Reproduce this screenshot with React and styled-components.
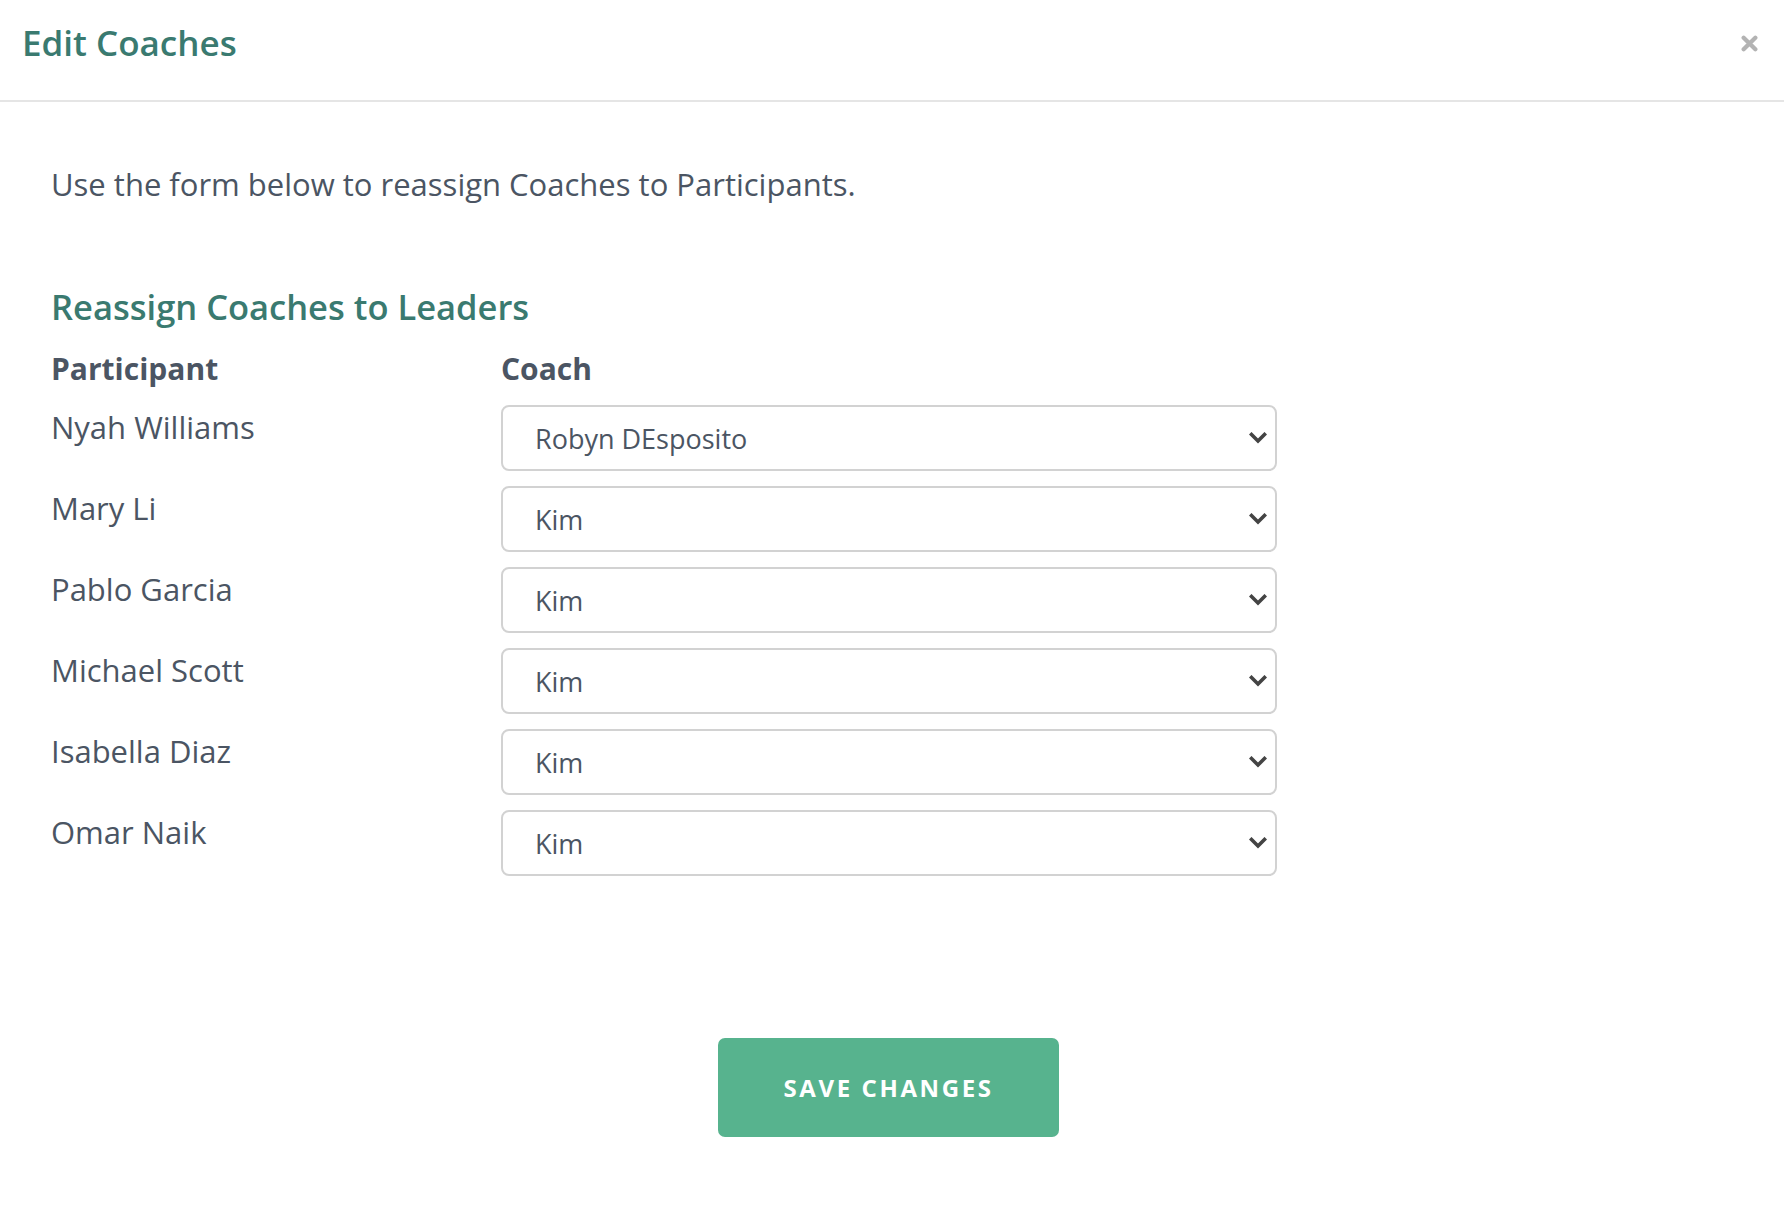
import React from "react";
import styled, { createGlobalStyle } from "styled-components";

const GlobalStyle = createGlobalStyle`
  html, body {
    margin: 0;
    padding: 0;
    background: #ffffff;
  }
  body {
    font-family: "Open Sans", "Noto Sans", sans-serif;
    color: #4b5563;
  }
`;

const rows = [
  { name: "Nyah Williams", coach: "Robyn DEsposito" },
  { name: "Mary Li", coach: "Kim" },
  { name: "Pablo Garcia", coach: "Kim" },
  { name: "Michael Scott", coach: "Kim" },
  { name: "Isabella Diaz", coach: "Kim" },
  { name: "Omar Naik", coach: "Kim" },
];

const coaches = ["Robyn DEsposito", "Kim"];

const Modal = styled.div`
  width: 1784px;
  min-height: 1218px;
  background: #fff;
`;

const Header = styled.header`
  display: flex;
  align-items: center;
  justify-content: space-between;
  height: 102px;
  box-sizing: border-box;
  padding: 0 21px 14px 22px;
  border-bottom: 2px solid #e5e5e5;
`;

const Title = styled.h1`
  margin: 0;
  font-size: 35px;
  font-weight: 600;
  line-height: 50px;
  color: #3a7a70;
`;

const CloseButton = styled.button`
  display: flex;
  align-items: center;
  justify-content: center;
  width: 28px;
  height: 28px;
  padding: 0;
  border: none;
  background: none;
  cursor: pointer;
`;

const Body = styled.div`
  padding: 60px 51px 0;
`;

const Intro = styled.p`
  margin: 0;
  font-size: 31px;
  line-height: 44px;
`;

const SectionTitle = styled.h2`
  margin: 76px 0 0;
  font-size: 34.5px;
  font-weight: 600;
  line-height: 50px;
  color: #3a7a70;
`;

const Grid = styled.div`
  display: grid;
  grid-template-columns: 450px 776px;
  row-gap: 15px;
  margin-top: 15px;
`;

const ColumnLabel = styled.div`
  font-size: 30px;
  font-weight: 700;
  line-height: 44px;
  margin-bottom: -1px;
`;

const Name = styled.div`
  font-size: 31px;
  line-height: 44px;
`;

const SelectWrap = styled.div`
  position: relative;
  height: 66px;
`;

const Select = styled.select`
  appearance: none;
  width: 100%;
  height: 100%;
  box-sizing: border-box;
  padding: 0 60px 0 32px;
  border: 2px solid #d2d2d2;
  border-radius: 8px;
  background: #fff;
  font-family: inherit;
  font-size: 27px;
  color: #4b5563;
  outline: none;
`;

const Chevron = styled.svg`
  position: absolute;
  right: 10px;
  top: 50%;
  transform: translateY(-50%);
  pointer-events: none;
`;

const Footer = styled.div`
  display: flex;
  justify-content: center;
  padding: 162px 58px 0 51px;
`;

const SaveButton = styled.button`
  width: 341px;
  height: 99px;
  border: none;
  border-radius: 7px;
  background: #57b38e;
  color: #fff;
  font-family: inherit;
  font-size: 24px;
  font-weight: 700;
  letter-spacing: 2.6px;
  text-transform: uppercase;
  cursor: pointer;
`;

const CoachSelect = ({ value }) => (
  <SelectWrap>
    <Select defaultValue={value}>
      {coaches.map((c) => (
        <option key={c} value={c}>
          {c}
        </option>
      ))}
    </Select>
    <Chevron width="18" height="12" viewBox="0 0 18 12">
      <polyline
        points="2.5,2.5 9,9 15.5,2.5"
        fill="none"
        stroke="#444"
        strokeWidth="3.6"
        strokeLinecap="square"
      />
    </Chevron>
  </SelectWrap>
);

export default function App() {
  return (
    <>
      <GlobalStyle />
      <Modal>
        <Header>
          <Title>Edit Coaches</Title>
          <CloseButton aria-label="Close">
            <svg width="17" height="17" viewBox="0 0 16 16">
              <path
                d="M2.5 2.5 L13.5 13.5 M13.5 2.5 L2.5 13.5"
                stroke="#b3b3b3"
                strokeWidth="4"
                strokeLinecap="round"
              />
            </svg>
          </CloseButton>
        </Header>
        <Body>
          <Intro>Use the form below to reassign Coaches to Participants.</Intro>
          <SectionTitle>Reassign Coaches to Leaders</SectionTitle>
          <Grid>
            <ColumnLabel>Participant</ColumnLabel>
            <ColumnLabel>Coach</ColumnLabel>
            {rows.map((r) => (
              <React.Fragment key={r.name}>
                <Name>{r.name}</Name>
                <CoachSelect value={r.coach} />
              </React.Fragment>
            ))}
          </Grid>
        </Body>
        <Footer>
          <SaveButton type="button">Save Changes</SaveButton>
        </Footer>
      </Modal>
    </>
  );
}
